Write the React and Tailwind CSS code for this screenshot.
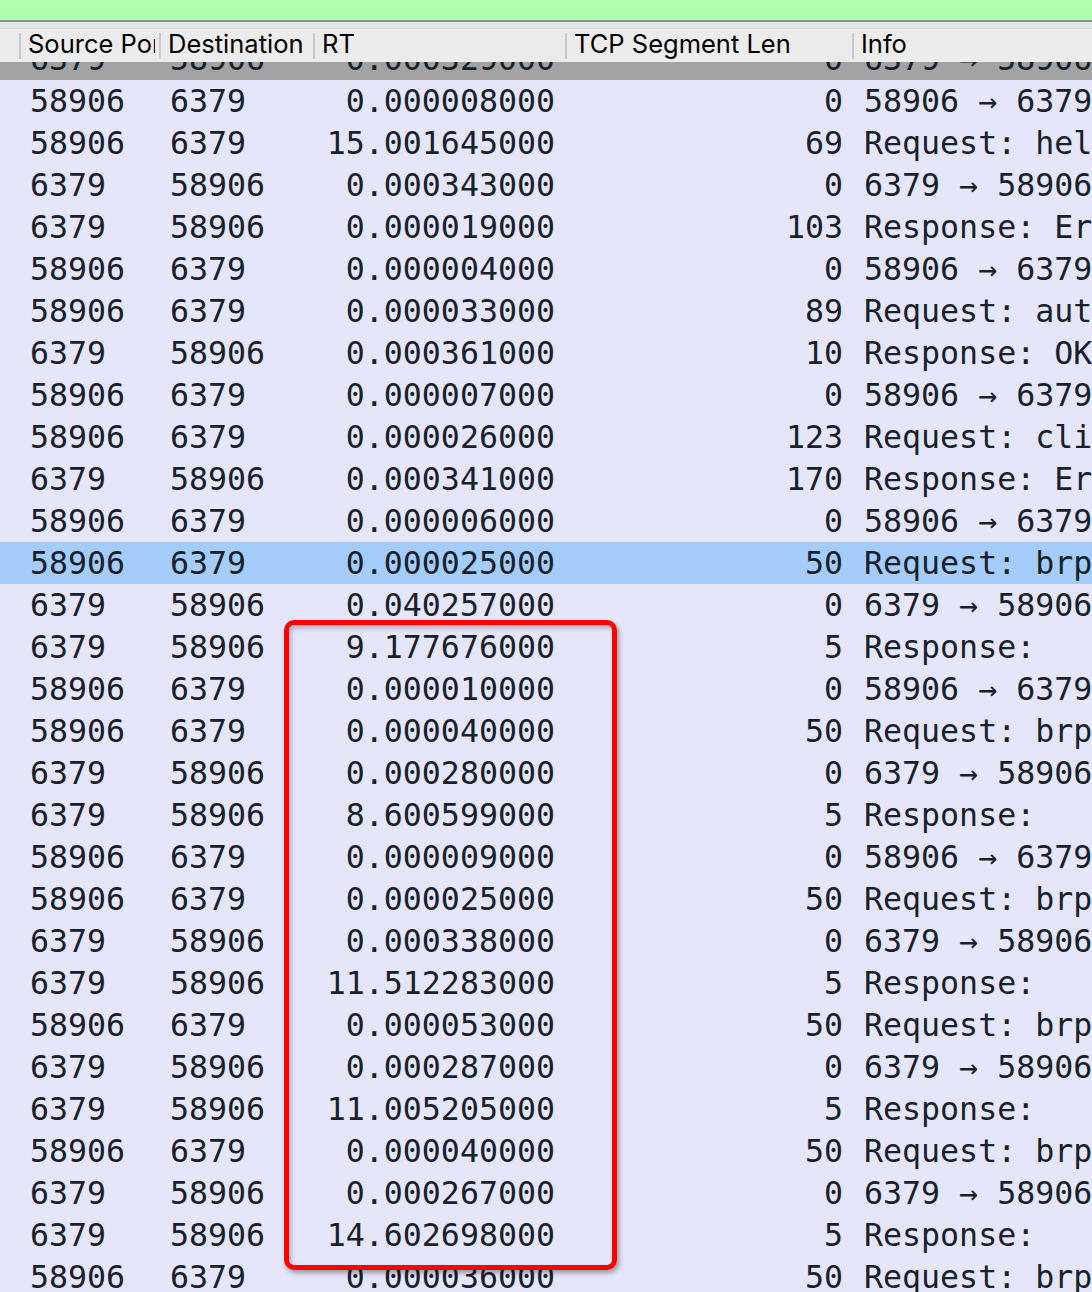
import React from 'react';

const rows = [
  ['58906', '6379', '0.000008000', '0', '58906 → 6379 [ACK] Seq=1 Ack=1'],
  ['58906', '6379', '15.001645000', '69', 'Request: hello 3 auth default'],
  ['6379', '58906', '0.000343000', '0', '6379 → 58906 [ACK] Seq=1 Ack=70'],
  ['6379', '58906', '0.000019000', '103', 'Response: Error'],
  ['58906', '6379', '0.000004000', '0', '58906 → 6379 [ACK] Seq=70'],
  ['58906', '6379', '0.000033000', '89', 'Request: auth default'],
  ['6379', '58906', '0.000361000', '10', 'Response: OK'],
  ['58906', '6379', '0.000007000', '0', '58906 → 6379 [ACK] Seq=159'],
  ['58906', '6379', '0.000026000', '123', 'Request: client setinfo'],
  ['6379', '58906', '0.000341000', '170', 'Response: Error'],
  ['58906', '6379', '0.000006000', '0', '58906 → 6379 [ACK] Seq=282'],
  ['58906', '6379', '0.000025000', '50', 'Request: brpop queue 10', true],
  ['6379', '58906', '0.040257000', '0', '6379 → 58906 [ACK] Seq=283'],
  ['6379', '58906', '9.177676000', '5', 'Response:'],
  ['58906', '6379', '0.000010000', '0', '58906 → 6379 [ACK] Seq=332'],
  ['58906', '6379', '0.000040000', '50', 'Request: brpop queue 10'],
  ['6379', '58906', '0.000280000', '0', '6379 → 58906 [ACK] Seq=288'],
  ['6379', '58906', '8.600599000', '5', 'Response:'],
  ['58906', '6379', '0.000009000', '0', '58906 → 6379 [ACK] Seq=382'],
  ['58906', '6379', '0.000025000', '50', 'Request: brpop queue 10'],
  ['6379', '58906', '0.000338000', '0', '6379 → 58906 [ACK] Seq=293'],
  ['6379', '58906', '11.512283000', '5', 'Response:'],
  ['58906', '6379', '0.000053000', '50', 'Request: brpop queue 10'],
  ['6379', '58906', '0.000287000', '0', '6379 → 58906 [ACK] Seq=298'],
  ['6379', '58906', '11.005205000', '5', 'Response:'],
  ['58906', '6379', '0.000040000', '50', 'Request: brpop queue 10'],
  ['6379', '58906', '0.000267000', '0', '6379 → 58906 [ACK] Seq=303'],
  ['6379', '58906', '14.602698000', '5', 'Response:'],
  ['58906', '6379', '0.000036000', '50', 'Request: brpop queue 10'],
];

const cols = 'grid grid-cols-[19px_140px_154px_252px_287px_240px]';
const mono = { fontFamily: '"DejaVu Sans Mono", "Liberation Mono", monospace' };

// one packet row, same column grid as the header
const Row = ({ r, bg }) => (
  <div
    className={`${cols} h-[42px] shrink-0 items-center text-[31.6px] leading-[42px] text-[#16212c] whitespace-nowrap ${bg}`}
    style={mono}
  >
    <div />
    <div className="pl-[11px] overflow-hidden">{r[0]}</div>
    <div className="pl-[11px] overflow-hidden">{r[1]}</div>
    <div className="pr-[10px] text-right overflow-hidden">{r[2]}</div>
    <div className="pr-[9px] text-right overflow-hidden">{r[3]}</div>
    <div className="pl-[12px] overflow-hidden">{r[4]}</div>
  </div>
);

const HeaderCell = ({ children }) => (
  <div className="flex items-center h-full pr-[4px] whitespace-nowrap">
    <div className="w-[2px] h-[26px] bg-[#c9c9c9] shrink-0" />
    <div className="pl-[7px] overflow-hidden leading-[30px] mb-[3px]">{children}</div>
  </div>
);

const App = () => {
  return (
    <div className="relative w-[1092px] h-[1292px] overflow-hidden bg-[#e6e6fb] flex flex-col">
      {/* filter bar */}
      <div className="h-[20px] bg-[#b0feab] shrink-0" />
      <div className="h-[2px] bg-[#8c8c8c] shrink-0" />
      <div className="h-[6px] bg-[#e4e4e4] shrink-0" />
      <div className="h-[1px] bg-[#d2d2d2] shrink-0" />

      {/* column header */}
      <div
        className={`${cols} h-[33px] shrink-0 bg-[#ececec] text-[25.5px] text-black`}
        style={{ fontFamily: 'Inter, "Liberation Sans", sans-serif' }}
      >
        <div />
        <HeaderCell>Source Port</HeaderCell>
        <HeaderCell>Destination</HeaderCell>
        <HeaderCell>RT</HeaderCell>
        <HeaderCell>TCP Segment Len</HeaderCell>
        <HeaderCell>Info</HeaderCell>
      </div>

      {/* row scrolled under the header */}
      <div className="h-[18px] shrink-0 overflow-hidden flex flex-col justify-end bg-[#a3a3a3]">
        <Row r={['6379', '58906', '0.000329000', '0', '6379 → 58906 [ACK] Seq=1']} bg="bg-[#a3a3a3]" />
      </div>

      {rows.map((r, i) => (
        <Row key={i} r={r} bg={r[5] ? 'bg-[#a5cdfb]' : 'bg-[#e6e6fb]'} />
      ))}

      {/* red highlight box */}
      <div className="absolute left-[284px] top-[620px] w-[333px] h-[650px] border-[5px] border-[#ff0000] rounded-[10px] shadow-[2px_3px_5px_rgba(0,0,0,0.35),inset_2px_3px_5px_rgba(0,0,0,0.25)]" />
    </div>
  );
};

export default App;
